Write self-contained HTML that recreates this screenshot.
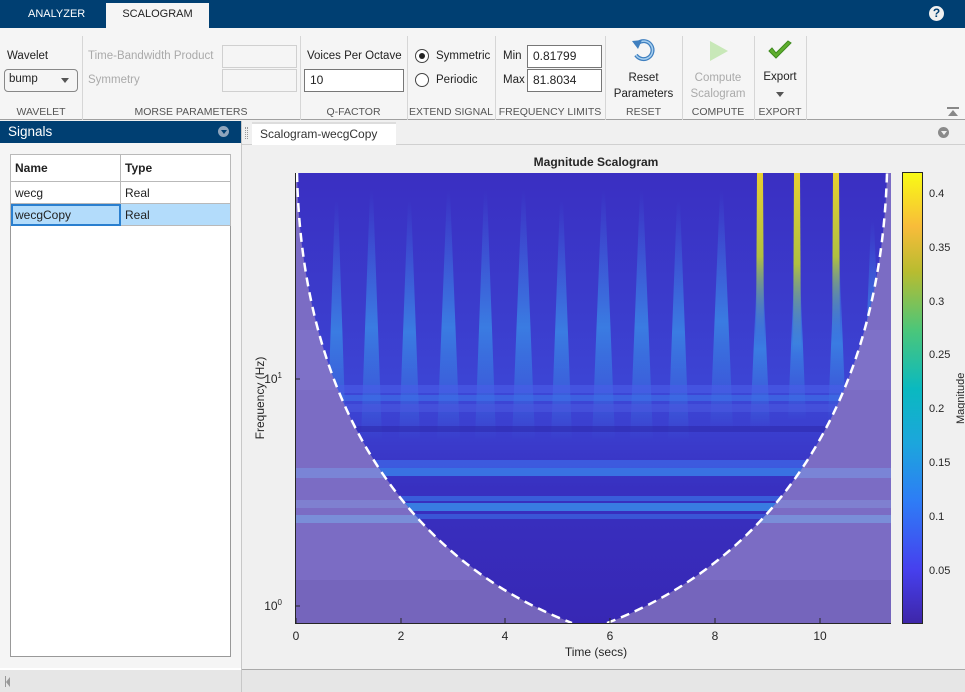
<!DOCTYPE html>
<html><head><meta charset="utf-8"><style>
*{box-sizing:border-box;margin:0;padding:0}
body{width:965px;height:692px;overflow:hidden;font-family:"Liberation Sans",sans-serif;font-size:12px;color:#222;background:#f0f0f0;position:relative}
.a{position:absolute;white-space:nowrap}
.lbl{position:absolute;font-size:10.5px;color:#555;text-align:center;white-space:nowrap}
.sep{position:absolute;top:36px;width:1px;height:84px;background:#d6d6d6}
.inp{position:absolute;background:#fff;border:1px solid #a8a8a8;font-size:12px;padding:3px 5px;height:23px}
.dis{border-color:#d0d0d0;background:#f5f5f5}
.g{color:#aaa}
.t{font-size:11.5px}
td{border:1px solid #b9b9b9;padding:0 4px;font-size:12px;height:22px}
</style></head><body>
<div class="a" style="left:0;top:0;width:965px;height:28px;background:#003f72"></div>
<div class="a" style="left:28px;top:8px;color:#fff;font-size:11px">ANALYZER</div>
<div class="a" style="left:106px;top:3px;width:103px;height:25px;background:#f5f5f5;text-align:center;padding-top:5px;font-size:11px">SCALOGRAM</div>
<div class="a" style="left:929px;top:6px;width:15px;height:15px;border-radius:50%;background:#f0f0f0;color:#003f72;font-weight:bold;font-size:12px;text-align:center;line-height:15px">?</div>
<div class="a" style="left:0;top:28px;width:965px;height:92px;background:#f5f5f5;border-bottom:1px solid #a0a0a0"></div>
<div class="a t" style="left:7px;top:50px">Wavelet</div>
<div class="a t" style="left:4px;top:69px;width:74px;height:23px;border:1px solid #888;border-radius:4px;background:#f5f5f5;padding:3px 4px">bump<span style="position:absolute;right:8px;top:8px;border:4px solid transparent;border-top:5px solid #555"></span></div>
<div class="lbl" style="left:0;top:106px;width:82px">WAVELET</div>
<div class="sep" style="left:82px"></div>
<div class="a g t" style="left:88px;top:50px">Time-Bandwidth Product</div>
<div class="a g t" style="left:88px;top:74px">Symmetry</div>
<div class="inp dis" style="left:222px;top:45px;width:75px"></div>
<div class="inp dis" style="left:222px;top:69px;width:75px"></div>
<div class="lbl" style="left:82px;top:106px;width:218px">MORSE PARAMETERS</div>
<div class="sep" style="left:300px"></div>
<div class="a t" style="left:307px;top:50px">Voices Per Octave</div>
<div class="inp" style="left:304px;top:69px;width:100px;border-color:#777">10</div>
<div class="lbl" style="left:300px;top:106px;width:107px">Q-FACTOR</div>
<div class="sep" style="left:407px"></div>
<div class="a" style="left:415px;top:49px;width:14px;height:14px;border:1px solid #444;border-radius:50%;background:#fff"><div style="margin:3px;width:6px;height:6px;border-radius:50%;background:#222"></div></div>
<div class="a t" style="left:436px;top:50px">Symmetric</div>
<div class="a" style="left:415px;top:73px;width:14px;height:14px;border:1px solid #444;border-radius:50%;background:#fff"></div>
<div class="a t" style="left:436px;top:74px">Periodic</div>
<div class="lbl" style="left:407px;top:106px;width:88px">EXTEND SIGNAL</div>
<div class="sep" style="left:495px"></div>
<div class="a t" style="left:503px;top:50px">Min</div>
<div class="a t" style="left:503px;top:74px">Max</div>
<div class="inp" style="left:527px;top:45px;width:75px;border-color:#777">0.81799</div>
<div class="inp" style="left:527px;top:69px;width:75px;border-color:#777">81.8034</div>
<div class="lbl" style="left:495px;top:106px;width:110px">FREQUENCY LIMITS</div>
<div class="sep" style="left:605px"></div>
<svg class="a" style="left:630px;top:37px" width="28" height="28" viewBox="0 0 28 28"><path d="M8 6 A9 9 0 1 1 6 18" fill="none" stroke="#3f7fbf" stroke-width="4"/><path d="M8 6 A9 9 0 1 1 6 18" fill="none" stroke="#a8d0f0" stroke-width="1.5"/><path d="M2 4 L12 3 L8 12 Z" fill="#3f7fbf"/></svg>
<div class="a t" style="left:605px;top:70px;width:77px;text-align:center;line-height:16px">Reset<br>Parameters</div>
<div class="lbl" style="left:605px;top:106px;width:77px">RESET</div>
<div class="sep" style="left:682px"></div>
<svg class="a" style="left:708px;top:39px" width="22" height="24"><path d="M2 2 L20 12 L2 22 Z" fill="#c8e8b8"/></svg>
<div class="a g t" style="left:682px;top:70px;width:72px;text-align:center;line-height:16px">Compute<br>Scalogram</div>
<div class="lbl" style="left:682px;top:106px;width:72px">COMPUTE</div>
<div class="sep" style="left:754px"></div>
<svg class="a" style="left:767px;top:40px" width="26" height="22"><path d="M2 11 L9 18 L24 3 L21 1 L9 13 L5 8 Z" fill="#5fae2e" stroke="#3e8a1e"/></svg>
<div class="a t" style="left:754px;top:71px;width:52px;text-align:center">Export</div>
<div class="a" style="left:776px;top:92px;border:4px solid transparent;border-top:5px solid #555"></div>
<div class="lbl" style="left:754px;top:106px;width:52px">EXPORT</div>
<div class="sep" style="left:806px"></div>
<div class="a" style="left:947px;top:107px;width:12px;height:2px;background:#888"></div>
<div class="a" style="left:948px;top:110px;border:5px solid transparent;border-bottom:6px solid #888;border-top:0"></div>
<!-- left panel -->
<div class="a" style="left:0;top:121px;width:241px;height:548px;background:#f5f5f5"></div>
<div class="a" style="left:0;top:121px;width:241px;height:22px;background:#003f72;color:#fff;font-size:13.5px;padding:3px 8px">Signals</div>
<div class="a" style="left:218px;top:126px;width:11px;height:11px;border-radius:50%;background:#8fa5bd"></div>
<div class="a" style="left:221px;top:130px;border:3px solid transparent;border-top:4px solid #003f72"></div>
<div class="a" style="left:10px;top:154px;width:221px;height:503px;background:#fff;border:1px solid #999"></div>
<table class="a" style="left:10px;top:154px;width:221px;border-collapse:collapse">
<tr><td style="width:110px;height:27px;font-weight:bold">Name</td><td style="font-weight:bold">Type</td></tr>
<tr><td>wecg</td><td>Real</td></tr>
<tr style="background:#b3dcfb"><td style="outline:2px solid #2a7fcf;outline-offset:-2px">wecgCopy</td><td>Real</td></tr>
</table>
<div class="a" style="left:241px;top:121px;width:1px;height:571px;background:#c8c8c8"></div>
<!-- right tab -->
<div class="a" style="left:242px;top:121px;width:723px;height:24px;background:#f0f0f0;border-bottom:1px solid #d0d0d0"></div>
<div class="a" style="left:245px;top:127px;width:3px;height:12px;border-left:1px dotted #999;border-right:1px dotted #999"></div>
<div class="a" style="left:252px;top:122px;width:144px;height:23px;background:#fff;border-top:2px solid #ddd;padding:3px 8px;color:#333">Scalogram-wecgCopy</div>
<div class="a" style="left:938px;top:127px;width:11px;height:11px;border-radius:50%;background:#8a8a8a"></div>
<div class="a" style="left:941px;top:131px;border:3px solid transparent;border-top:4px solid #f0f0f0"></div>
<!-- plot -->
<svg class="a" style="left:242px;top:146px" width="723" height="523" viewBox="242 146 723 523" font-family="Liberation Sans, sans-serif">
<defs>
<clipPath id="cone"><path d="M297 173 C 302 420 420 565 575 624 L 605 624 C 760 565 880 420 887 173 Z"/></clipPath>
<linearGradient id="inner" x1="0" y1="0" x2="0" y2="1">
<stop offset="0" stop-color="#3a2fc2"/><stop offset="0.3" stop-color="#3b3ccc"/><stop offset="0.5" stop-color="#3c46d6"/><stop offset="0.7" stop-color="#3830c0"/><stop offset="1" stop-color="#3727b4"/></linearGradient>
<linearGradient id="st" x1="0" y1="0" x2="0" y2="1"><stop offset="0" stop-color="#3f7fe8" stop-opacity="0"/><stop offset="0.55" stop-color="#3a90e8" stop-opacity="0.75"/><stop offset="1" stop-color="#3a8fe8" stop-opacity="0"/></linearGradient>
<linearGradient id="ys" x1="0" y1="0" x2="0" y2="1"><stop offset="0" stop-color="#e8d030"/><stop offset="0.5" stop-color="#b0c040"/><stop offset="1" stop-color="#3aa0e0" stop-opacity="0"/></linearGradient>
<linearGradient id="cb" x1="0" y1="1" x2="0" y2="0"><stop offset="0" stop-color="#3e26a8"/><stop offset="0.12" stop-color="#4640ee"/><stop offset="0.27" stop-color="#2e7cf6"/><stop offset="0.4" stop-color="#1ca6dc"/><stop offset="0.52" stop-color="#0ab9c0"/><stop offset="0.65" stop-color="#4bc67a"/><stop offset="0.78" stop-color="#b8bc30"/><stop offset="0.88" stop-color="#f8bc3a"/><stop offset="1" stop-color="#f9fb14"/></linearGradient>
</defs>
<rect x="295" y="173" width="596" height="451" fill="#7b6cc4"/>
<rect x="295" y="330" width="596" height="60" fill="#8074cc" opacity="0.6"/>
<rect x="295" y="468" width="596" height="10" fill="#7a84d6"/>
<rect x="295" y="515" width="596" height="8" fill="#7a8ed8"/>
<rect x="295" y="500" width="596" height="8" fill="#7f80d0"/>
<rect x="295" y="580" width="596" height="44" fill="#7565bc"/>
<g clip-path="url(#cone)">
<rect x="295" y="173" width="596" height="451" fill="url(#inner)"/>
<g fill="url(#st)">
<polygon points="335,200 338,200 346,440 327,440"/><polygon points="370,190 373,190 382,440 361,440"/><polygon points="408,200 411,200 420,440 399,440"/><polygon points="447,190 450,190 460,440 437,440"/><polygon points="484,190 487,190 496,440 475,440"/><polygon points="522,190 525,190 535,440 512,440"/><polygon points="560,200 563,200 572,440 551,440"/><polygon points="602,190 605,190 615,440 592,440"/><polygon points="640,190 643,190 653,440 630,440"/><polygon points="677,200 680,200 689,440 668,440"/><polygon points="720,190 723,190 733,430 710,430"/><polygon points="758,250 762,250 770,430 750,430"/><polygon points="795,250 799,250 806,420 788,420"/><polygon points="835,250 839,250 846,420 828,420"/><polygon points="871,220 874,220 882,420 863,420"/>
</g>
<rect x="295" y="385" width="596" height="8" fill="#4a5de8" opacity="0.6"/>
<rect x="295" y="395" width="596" height="6" fill="#3e72e8" opacity="0.6"/>
<rect x="295" y="404" width="596" height="8" fill="#4a58e0" opacity="0.6"/>
<rect x="295" y="426" width="596" height="6" fill="#2c26a8" opacity="0.5"/>
<rect x="295" y="460" width="596" height="8" fill="#3e6ae8" opacity="0.7"/>
<rect x="295" y="468" width="596" height="8" fill="#3a82ea" opacity="0.8"/>
<rect x="295" y="496" width="596" height="5" fill="#3a70e6" opacity="0.7"/>
<rect x="295" y="503" width="596" height="8" fill="#3890ea" opacity="0.8"/>
<rect x="295" y="514" width="596" height="5" fill="#3c66e0" opacity="0.7"/>
<polygon points="757,173 763,173 764,340 756,340" fill="url(#ys)"/>
<polygon points="794,173 800,173 801,355 793,355" fill="url(#ys)"/>
<polygon points="833,173 839,173 840,340 832,340" fill="url(#ys)"/>
</g>
<path d="M297 173 C 302 420 420 565 572 623 M607 623 C 760 565 880 420 887 173" fill="none" stroke="#fff" stroke-width="2.5" stroke-dasharray="9 6"/>
<path d="M295.5 173 V623.5 H891" fill="none" stroke="#262626" stroke-width="1"/>
<g stroke="#262626"><path d="M296 623v-5M401 623v-5M505 623v-5M610 623v-5M715 623v-5M820 623v-5M295 379h5M295 606h5"/></g>
<g font-size="12" fill="#262626" text-anchor="middle">
<text x="296" y="640">0</text><text x="401" y="640">2</text><text x="505" y="640">4</text><text x="610" y="640">6</text><text x="715" y="640">8</text><text x="820" y="640">10</text>
<text x="596" y="656">Time (secs)</text>
<text x="596" y="166" font-weight="bold">Magnitude Scalogram</text>
<text x="282" y="383" text-anchor="end">10<tspan font-size="8" dy="-5">1</tspan></text>
<text x="282" y="610" text-anchor="end">10<tspan font-size="8" dy="-5">0</tspan></text>
<text transform="translate(264 398) rotate(-90)">Frequency (Hz)</text>
</g>
<rect x="902.5" y="172.5" width="20" height="451" fill="url(#cb)" stroke="#262626"/>
<g font-size="11" fill="#262626">
<text x="929" y="197">0.4</text><text x="929" y="251">0.35</text><text x="929" y="305">0.3</text><text x="929" y="358">0.25</text><text x="929" y="412">0.2</text><text x="929" y="466">0.15</text><text x="929" y="520">0.1</text><text x="929" y="574">0.05</text>
<text transform="translate(964 424) rotate(-90)">Magnitude</text>
</g>
</svg>
<!-- status bar -->
<div class="a" style="left:0;top:669px;width:965px;height:23px;background:#e6e6e6;border-top:1px solid #aaa"></div>
<div class="a" style="left:0;top:668px;width:241px;height:2px;background:#fff"></div>
<div class="a" style="left:241px;top:669px;width:1px;height:23px;background:#c8c8c8"></div>
<div class="a" style="left:5px;top:676px;width:1px;height:11px;background:#999"></div>
<div class="a" style="left:6px;top:677px;border:5px solid transparent;border-right:4px solid #999;border-left:0"></div>
</body></html>
